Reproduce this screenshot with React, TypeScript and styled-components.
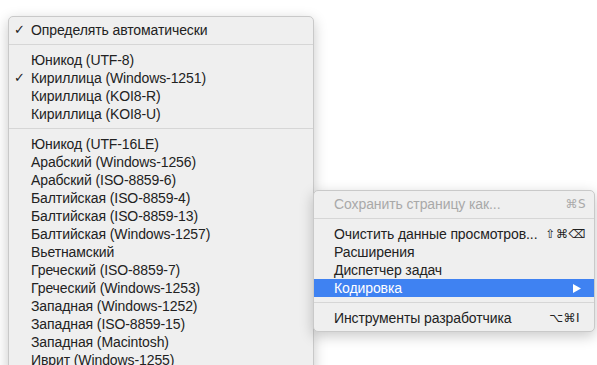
import React from "react"
import styled, { createGlobalStyle } from "styled-components"

const GlobalStyle = createGlobalStyle`
  html, body {
    margin: 0;
    padding: 0;
    background: #ffffff;
    overflow: hidden;
    width: 597px;
    height: 365px;
  }
  body {
    font-family: "Liberation Sans", "DejaVu Sans", Arial, sans-serif;
  }
`

const Desktop = styled.div`
  position: relative;
  width: 597px;
  height: 365px;
  overflow: hidden;
  background: #ffffff;
`

const Menu = styled.div<{ $left: number; $top: number; $width: number; $open?: boolean }>`
  position: absolute;
  left: ${(p) => p.$left}px;
  top: ${(p) => p.$top}px;
  width: ${(p) => p.$width}px;
  box-sizing: border-box;
  padding: 4px 0;
  background: #efefef;
  border: 1px solid #c9c9c9;
  border-radius: ${(p) => (p.$open ? "5px 5px 0 0" : "5px")};
  box-shadow: 0 4px 14px rgba(0, 0, 0, 0.22);
  display: flex;
  flex-direction: column;
  z-index: ${(p) => (p.$open ? 1 : 2)};
`

const Item = styled.div<{ $active?: boolean; $disabled?: boolean; $pad: number }>`
  height: 18px;
  display: flex;
  align-items: center;
  padding: 0 8px 0 ${(p) => p.$pad}px;
  position: relative;
  font-size: 14px;
  letter-spacing: -0.1px;
  white-space: nowrap;
  color: ${(p) => (p.$active ? "#ffffff" : p.$disabled ? "#a9a9a9" : "#222222")};
  background: ${(p) => (p.$active ? "#3f82f2" : "transparent")};
`

const Check = styled.span`
  position: absolute;
  left: 5px;
  top: 0;
  line-height: 18px;
  font-family: "DejaVu Sans", sans-serif;
  font-size: 13px;
  font-weight: bold;
`

const Label = styled.span`
  flex: 1;
`

const Shortcut = styled.span<{ $gap?: number }>`
  font-family: "DejaVu Sans", sans-serif;
  font-size: 12px;
  letter-spacing: 0.5px;
  margin-right: ${(p) => p.$gap ?? 0}px;
`

const Separator = styled.div`
  height: 1px;
  margin: 5px 0 6px;
  background: #d6d6d6;
`

const Arrow = () => (
  <svg width="8" height="9" viewBox="0 0 8 9" style={{ marginRight: 5 }}>
    <path d="M0 0 L8 4.5 L0 9 Z" fill="#ffffff" />
  </svg>
)

type Entry = { label: string; checked?: boolean } | "sep"

const encodings: Entry[] = [
  { label: "Определять автоматически", checked: true },
  "sep",
  { label: "Юникод (UTF-8)" },
  { label: "Кириллица (Windows-1251)", checked: true },
  { label: "Кириллица (KOI8-R)" },
  { label: "Кириллица (KOI8-U)" },
  "sep",
  { label: "Юникод (UTF-16LE)" },
  { label: "Арабский (Windows-1256)" },
  { label: "Арабский (ISO-8859-6)" },
  { label: "Балтийская (ISO-8859-4)" },
  { label: "Балтийская (ISO-8859-13)" },
  { label: "Балтийская (Windows-1257)" },
  { label: "Вьетнамский" },
  { label: "Греческий (ISO-8859-7)" },
  { label: "Греческий (Windows-1253)" },
  { label: "Западная (Windows-1252)" },
  { label: "Западная (ISO-8859-15)" },
  { label: "Западная (Macintosh)" },
  { label: "Иврит (Windows-1255)" },
]

export default function App() {
  return (
    <>
      <GlobalStyle />
      <Desktop>
        <Menu $left={8} $top={16} $width={306} $open>
          {encodings.map((e, i) =>
            e === "sep" ? (
              <Separator key={i} />
            ) : (
              <Item key={i} $pad={22}>
                {e.checked && <Check>✓</Check>}
                <Label>{e.label}</Label>
              </Item>
            )
          )}
        </Menu>

        <Menu $left={313} $top={190} $width={282}>
          <Item $pad={20} $disabled>
            <Label>Сохранить страницу как...</Label>
            <Shortcut>⌘S</Shortcut>
          </Item>
          <Separator />
          <Item $pad={20}>
            <Label>Очистить данные просмотров...</Label>
            <Shortcut>⇧⌘⌫</Shortcut>
          </Item>
          <Item $pad={20}>
            <Label>Расширения</Label>
          </Item>
          <Item $pad={20}>
            <Label>Диспетчер задач</Label>
          </Item>
          <Item $pad={20} $active>
            <Label>Кодировка</Label>
            <Arrow />
          </Item>
          <Separator />
          <Item $pad={20}>
            <Label>Инструменты разработчика</Label>
            <Shortcut $gap={6}>⌥⌘I</Shortcut>
          </Item>
        </Menu>
      </Desktop>
    </>
  )
}
